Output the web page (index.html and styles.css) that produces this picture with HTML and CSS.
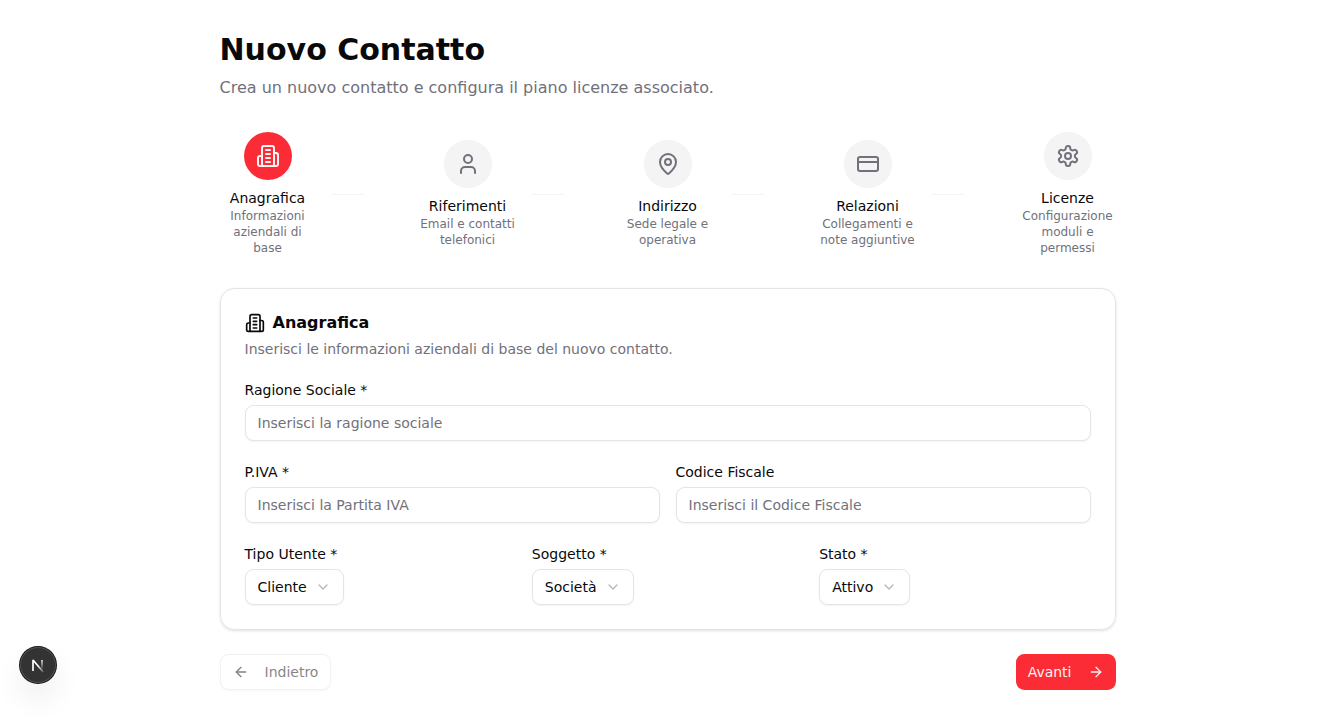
FILE: index.html
```html
<!DOCTYPE html>
<html lang="it">
<head>
<meta charset="utf-8">
<title>Nuovo Contatto</title>
<link rel="stylesheet" href="styles.css">
</head>
<body>
<svg class="sprite" aria-hidden="true">
  <symbol id="building" viewBox="0 0 24 24"><path d="M6 22V4a2 2 0 0 1 2-2h8a2 2 0 0 1 2 2v18Z"/><path d="M6 12H4a2 2 0 0 0-2 2v6a2 2 0 0 0 2 2h2"/><path d="M18 9h2a2 2 0 0 1 2 2v9a2 2 0 0 1-2 2h-2"/><path d="M10 6h4"/><path d="M10 10h4"/><path d="M10 14h4"/><path d="M10 18h4"/></symbol>
  <symbol id="chevron" viewBox="0 0 24 24"><path d="m6 9 6 6 6-6"/></symbol>
</svg>
<main class="page">
  <header class="page-header">
    <h1 class="page-title">Nuovo Contatto</h1>
    <p class="page-subtitle">Crea un nuovo contatto e configura il piano licenze associato.</p>
  </header>

  <nav class="stepper">
    <div class="step-group">
      <div class="step">
        <div class="step-circle active"><svg class="icon icon-lg"><use href="#building"/></svg></div>
        <p class="step-title">Anagrafica</p>
        <p class="step-text">Informazioni aziendali di base</p>
      </div>
      <div class="step-line"></div>
    </div>
    <div class="step-group">
      <div class="step">
        <div class="step-circle"><svg class="icon icon-lg" viewBox="0 0 24 24"><path d="M19 21v-2a4 4 0 0 0-4-4H9a4 4 0 0 0-4 4v2"/><circle cx="12" cy="7" r="4"/></svg></div>
        <p class="step-title">Riferimenti</p>
        <p class="step-text">Email e contatti telefonici</p>
      </div>
      <div class="step-line"></div>
    </div>
    <div class="step-group">
      <div class="step">
        <div class="step-circle"><svg class="icon icon-lg" viewBox="0 0 24 24"><path d="M20 10c0 4.993-5.539 10.193-7.399 11.799a1 1 0 0 1-1.202 0C9.539 20.193 4 14.993 4 10a8 8 0 0 1 16 0"/><circle cx="12" cy="10" r="3"/></svg></div>
        <p class="step-title">Indirizzo</p>
        <p class="step-text">Sede legale e operativa</p>
      </div>
      <div class="step-line"></div>
    </div>
    <div class="step-group">
      <div class="step">
        <div class="step-circle"><svg class="icon icon-lg" viewBox="0 0 24 24"><rect width="20" height="14" x="2" y="5" rx="2"/><path d="M2 10h20"/></svg></div>
        <p class="step-title">Relazioni</p>
        <p class="step-text">Collegamenti e note aggiuntive</p>
      </div>
      <div class="step-line"></div>
    </div>
    <div class="step-group">
      <div class="step">
        <div class="step-circle"><svg class="icon icon-lg" viewBox="0 0 24 24"><path d="M12.22 2h-.44a2 2 0 0 0-2 2v.18a2 2 0 0 1-1 1.73l-.43.25a2 2 0 0 1-2 0l-.15-.08a2 2 0 0 0-2.73.73l-.22.38a2 2 0 0 0 .73 2.73l.15.1a2 2 0 0 1 1 1.72v.51a2 2 0 0 1-1 1.74l-.15.09a2 2 0 0 0-.73 2.73l.22.38a2 2 0 0 0 2.73.73l.15-.08a2 2 0 0 1 2 0l.43.25a2 2 0 0 1 1 1.73V20a2 2 0 0 0 2 2h.44a2 2 0 0 0 2-2v-.18a2 2 0 0 1 1-1.73l.43-.25a2 2 0 0 1 2 0l.15.08a2 2 0 0 0 2.73-.73l.22-.39a2 2 0 0 0-.73-2.73l-.15-.08a2 2 0 0 1-1-1.74v-.5a2 2 0 0 1 1-1.74l.15-.09a2 2 0 0 0 .73-2.73l-.22-.38a2 2 0 0 0-2.73-.73l-.15.08a2 2 0 0 1-2 0l-.43-.25a2 2 0 0 1-1-1.73V4a2 2 0 0 0-2-2z"/><circle cx="12" cy="12" r="3"/></svg></div>
        <p class="step-title">Licenze</p>
        <p class="step-text">Configurazione moduli e permessi</p>
      </div>
    </div>
  </nav>

  <form class="card">
    <div class="card-header">
      <h2 class="card-title"><svg class="icon icon-md"><use href="#building"/></svg>Anagrafica</h2>
      <p class="card-text">Inserisci le informazioni aziendali di base del nuovo contatto.</p>
    </div>
    <div class="field">
      <label class="label" for="ragione">Ragione Sociale *</label>
      <input class="input" id="ragione" placeholder="Inserisci la ragione sociale">
    </div>
    <div class="row two">
      <div class="field">
        <label class="label" for="piva">P.IVA *</label>
        <input class="input" id="piva" placeholder="Inserisci la Partita IVA">
      </div>
      <div class="field">
        <label class="label" for="cf">Codice Fiscale</label>
        <input class="input" id="cf" placeholder="Inserisci il Codice Fiscale">
      </div>
    </div>
    <div class="row three">
      <div class="field">
        <span class="label">Tipo Utente *</span>
        <button type="button" class="select">Cliente<svg class="icon icon-sm faded"><use href="#chevron"/></svg></button>
      </div>
      <div class="field">
        <span class="label">Soggetto *</span>
        <button type="button" class="select">Società<svg class="icon icon-sm faded"><use href="#chevron"/></svg></button>
      </div>
      <div class="field">
        <span class="label">Stato *</span>
        <button type="button" class="select">Attivo<svg class="icon icon-sm faded"><use href="#chevron"/></svg></button>
      </div>
    </div>
  </form>

  <footer class="actions">
    <button type="button" class="button outline" disabled><svg class="icon icon-sm" viewBox="0 0 24 24"><path d="m12 19-7-7 7-7"/><path d="M19 12H5"/></svg>Indietro</button>
    <button type="button" class="button primary">Avanti<svg class="icon icon-sm" viewBox="0 0 24 24"><path d="M5 12h14"/><path d="m12 5 7 7-7 7"/></svg></button>
  </footer>
</main>

<div class="dev-badge">
  <svg class="dev-mark" viewBox="0 0 36 36" fill="none">
    <defs>
      <linearGradient id="fade-diagonal" x1="18" y1="19" x2="23.5" y2="25.5" gradientUnits="userSpaceOnUse"><stop stop-color="#fff"/><stop offset="1" stop-color="#fff" stop-opacity=".15"/></linearGradient>
      <linearGradient id="fade-stem" x1="22" y1="13" x2="22" y2="23" gradientUnits="userSpaceOnUse"><stop stop-color="#fff" stop-opacity=".85"/><stop offset="1" stop-color="#fff" stop-opacity="0"/></linearGradient>
    </defs>
    <g stroke-width="1.7" stroke-linejoin="bevel">
      <path d="M23.2 25 13 13v11" stroke="url(#fade-diagonal)"/>
      <path d="M22 12.9v11" stroke="url(#fade-stem)"/>
    </g>
  </svg>
</div>
</body>
</html>
```
FILE: styles.css
```css
* { box-sizing: border-box; margin: 0; }

body {
  background: #fff;
  color: #09090b;
  font: 14px/20px "DejaVu Sans", sans-serif;
}

.sprite { display: none; }

.page {
  width: 896px;
  margin-left: 219.5px;
  padding: 32px 0;
  display: flex;
  flex-direction: column;
}

.page-header { margin-bottom: 32px; }
.page-title { font-size: 30px; line-height: 36px; font-weight: 700; margin-bottom: 8px; }
.page-subtitle { font-size: 16px; line-height: 24px; color: #71717b; }

.icon {
  flex: none;
  display: block;
  fill: none;
  stroke: currentColor;
  stroke-width: 2;
  stroke-linecap: round;
  stroke-linejoin: round;
}
.icon-lg { width: 24px; height: 24px; }
.icon-md { width: 20px; height: 20px; }
.icon-sm { width: 16px; height: 16px; }
.faded { color: #71717b; opacity: .5; }

.stepper { display: flex; justify-content: space-between; align-items: center; margin-bottom: 32px; }
.step-group { display: flex; align-items: center; }
.step { width: 96px; display: flex; flex-direction: column; align-items: center; text-align: center; }
.step-circle {
  width: 48px;
  height: 48px;
  margin-bottom: 8px;
  border-radius: 50%;
  display: flex;
  align-items: center;
  justify-content: center;
  background: #f4f4f5;
  color: #71717b;
}
.step-circle.active { background: #fb2c36; color: #fef2f2; }
.step-text { font-size: 12px; line-height: 16px; color: #71717b; }
.step-line { width: 32px; height: 1px; margin: 0 16px; background: #f4f4f5; }

.card {
  display: flex;
  flex-direction: column;
  gap: 24px;
  padding: 24px;
  border: 1px solid #e4e4e7;
  border-radius: 14.4px;
  box-shadow: 0 1px 3px rgba(0, 0, 0, .1), 0 1px 2px -1px rgba(0, 0, 0, .1);
}
.card-header { display: flex; flex-direction: column; gap: 6px; }
.card-title { display: flex; align-items: center; gap: 8px; font-size: 16px; line-height: 20px; font-weight: 700; }
.card-text { color: #71717b; }

.row { display: grid; gap: 16px; }
.two { grid-template-columns: repeat(2, 1fr); }
.three { grid-template-columns: repeat(3, 1fr); }
.field { display: flex; flex-direction: column; align-items: flex-start; gap: 8px; }
.label { line-height: 14px; }

.input, .select {
  height: 36px;
  padding: 4px 12px;
  border: 1px solid #e4e4e7;
  border-radius: 8.4px;
  background: #fff;
  color: inherit;
  font: inherit;
  box-shadow: 0 1px 2px rgba(0, 0, 0, .05);
}
.input { width: 100%; }
.input::placeholder { color: #71717b; opacity: 1; }
.select { display: flex; align-items: center; gap: 8px; }

.actions { display: flex; justify-content: space-between; margin-top: 24px; }
.button {
  height: 36px;
  padding: 0 12px;
  border: 0;
  border-radius: 8.4px;
  display: flex;
  align-items: center;
  gap: 16px;
  font: inherit;
}
.outline {
  border: 1px solid #e4e4e7;
  background: #fff;
  color: #09090b;
  box-shadow: 0 1px 2px rgba(0, 0, 0, .05);
  opacity: .5;
}
.primary { background: #fb2c36; color: #fef2f2; }

.dev-badge {
  position: absolute;
  left: 20px;
  top: 647px;
  width: 36px;
  height: 36px;
  border-radius: 50%;
  background: #333;
  box-shadow: 0 0 0 1px #171717, inset 0 0 0 1px rgba(255, 255, 255, .14), 0 16px 32px -8px rgba(0, 0, 0, .24);
}
.dev-mark { display: block; width: 36px; height: 36px; }
```
